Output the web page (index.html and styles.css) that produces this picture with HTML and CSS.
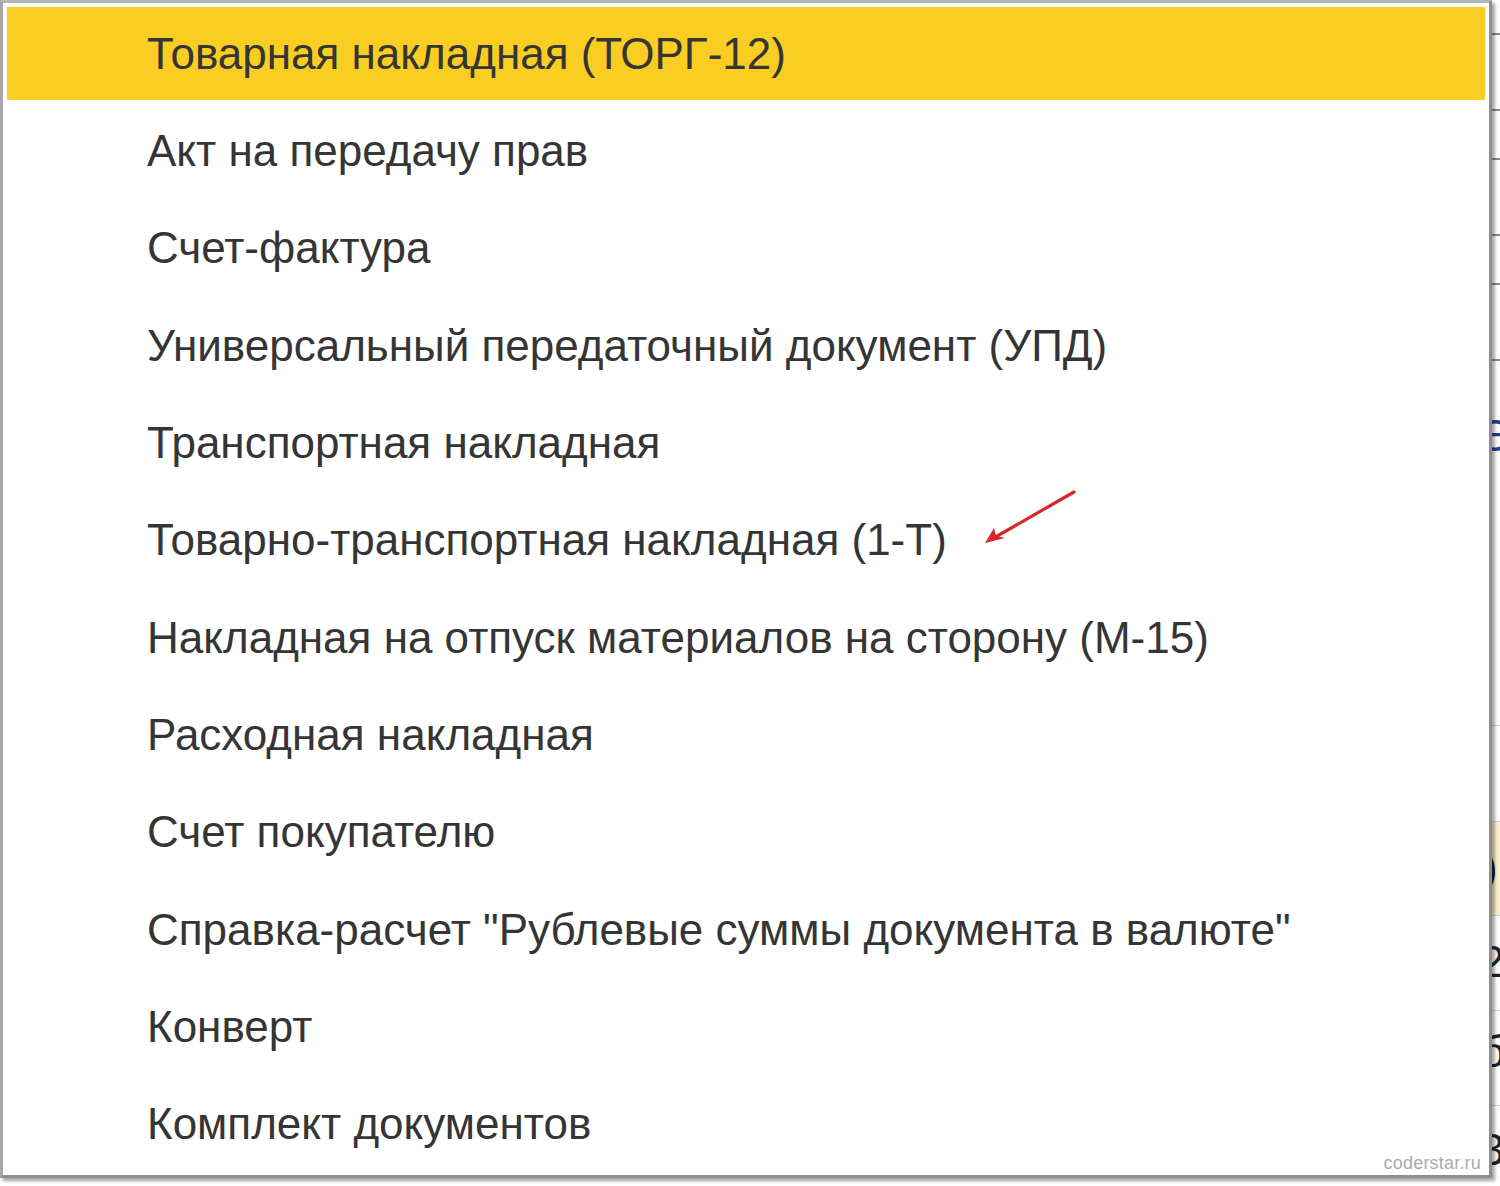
FILE: index.html
```html
<!DOCTYPE html>
<html lang="ru">
<head>
<meta charset="utf-8">
<title>Печать</title>
<link rel="stylesheet" href="styles.css">
</head>
<body>
<div class="page">
  <div class="backdrop">
    <div class="bg-row r1"></div>
    <div class="bg-row r2"></div>
    <div class="bg-row r3"></div>
    <div class="bg-row r4"></div>
    <div class="bg-row r5"></div>
    <div class="bg-row r6"></div>
    <div class="bg-glyph blue g1">Э</div>
    <div class="bg-row tan r7"></div>
    <div class="bg-row r8"></div>
    <div class="bg-cell sel"></div>
    <div class="bg-glyph g2">)</div>
    <div class="bg-row r9"></div>
    <div class="bg-glyph g3">2</div>
    <div class="bg-row r10"></div>
    <div class="bg-glyph g4">б</div>
    <div class="bg-row r11"></div>
    <div class="bg-glyph g5">3</div>
  </div>

  <div class="menu">
    <ul class="items">
      <li class="item active">Товарная накладная (ТОРГ-12)</li>
      <li class="item">Акт на передачу прав</li>
      <li class="item">Счет-фактура</li>
      <li class="item">Универсальный передаточный документ (УПД)</li>
      <li class="item">Транспортная накладная</li>
      <li class="item">Товарно-транспортная накладная (1-Т)</li>
      <li class="item">Накладная на отпуск материалов на сторону (М-15)</li>
      <li class="item">Расходная накладная</li>
      <li class="item">Счет покупателю</li>
      <li class="item">Справка-расчет "Рублевые суммы документа в валюте"</li>
      <li class="item">Конверт</li>
      <li class="item">Комплект документов</li>
    </ul>
    <div class="watermark">coderstar.ru</div>
  </div>

  <svg class="arrow" width="100" height="60" viewBox="0 0 100 60">
    <path d="M94 2 L12 49" stroke="#d9262b" stroke-width="3.2" fill="none" stroke-linecap="round"/>
    <path d="M5 53 L14 38 L16 46 L25 48 Z" fill="#d9262b"/>
  </svg>
</div>
</body>
</html>
```

FILE: styles.css
```css
html, body {
  margin: 0;
  padding: 0;
  background: #ffffff;
}

.page {
  position: relative;
  width: 1500px;
  height: 1186px;
  overflow: hidden;
  font-family: "Liberation Sans", Arial, sans-serif;
}

/* background content peeking on the right */
.backdrop {
  position: absolute;
  left: 1490px;
  top: 0;
  width: 10px;
  height: 1186px;
  overflow: hidden;
  background: #ffffff;
}

.bg-row {
  position: absolute;
  left: 0;
  width: 10px;
  height: 2px;
  background: #8a8a8a;
}
.bg-row.tan { background: #d8cfb8; height: 1px; }
.r1 { top: 33px; }
.r2 { top: 109px; }
.r3 { top: 158px; }
.r4 { top: 234px; }
.r5 { top: 283px; }
.r6 { top: 359px; }
.r7 { top: 725px; }
.r8 { top: 821px; height: 1px; background: #d6d6d6; }
.r9 { top: 915px; height: 1px; background: #d6d6d6; }
.r10 { top: 1010px; height: 1px; background: #d6d6d6; }
.r11 { top: 1105px; height: 1px; background: #d6d6d6; }

.bg-cell.sel {
  position: absolute;
  left: 0;
  top: 822px;
  width: 10px;
  height: 93px;
  background: #fbf1cf;
}

.bg-glyph {
  position: absolute;
  left: -10px;
  font-size: 44px;
  line-height: 44px;
  color: #222;
}
.bg-glyph.blue { color: #1f3f97; }
.g1 { top: 414px; }
.g2 { top: 846px; left: -7px; }
.g3 { top: 940px; }
.g4 { top: 1030px; }
.g5 { top: 1128px; }

/* the dropdown */
.menu {
  position: absolute;
  left: 0;
  top: 0;
  width: 1478px;
  height: 1168px;
  padding: 4px 4px 0 4px;
  background: #ffffff;
  border-top: 3px solid #b4b4b4;
  border-left: 3px solid #a6a6a6;
  border-right: 3px solid #8e8e8e;
  border-bottom: 3px solid #8e8e8e;
  box-shadow: 3px 3px 3px rgba(0, 0, 0, 0.35);
}

.items {
  list-style: none;
  margin: 0;
  padding: 0;
  display: grid;
  grid-template-rows: repeat(12, 97.33px);
}

.item {
  display: flex;
  align-items: center;
  padding: 0 0 4px 140px;
  font-size: 44px;
  color: #353535;
  white-space: nowrap;
}

.item.active {
  background: #f9cd22;
  background-clip: content-box;
  padding-left: 0;
  text-indent: 140px;
}

.watermark {
  position: absolute;
  right: 8px;
  bottom: 1px;
  font-size: 18px;
  color: #ababab;
  letter-spacing: 0.2px;
}

.arrow {
  position: absolute;
  left: 980px;
  top: 490px;
}
```
